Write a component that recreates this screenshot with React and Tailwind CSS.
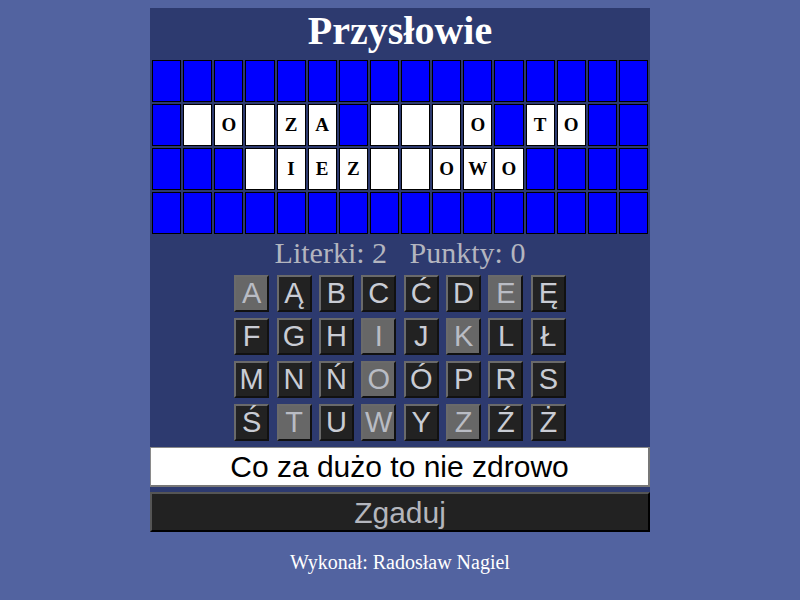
import React from "react";

const rows = [
  "################",
  "# O ZA#   O#TO##",
  "### IEZ  OWO####",
  "################",
];

const keys = [
  ["A", "Ą", "B", "C", "Ć", "D", "E", "Ę"],
  ["F", "G", "H", "I", "J", "K", "L", "Ł"],
  ["M", "N", "Ń", "O", "Ó", "P", "R", "S"],
  ["Ś", "T", "U", "W", "Y", "Z", "Ź", "Ż"],
];
const used = new Set(["A", "E", "I", "K", "O", "T", "W", "Z"]);

export default function App() {
  return (
    <div
      className="min-h-screen w-full bg-[#5263a0] pt-[8px] flex flex-col items-center"
      style={{ fontFamily: '"Liberation Serif", serif' }}
    >
      <div className="w-[500px] bg-[#2d3a6f] flex flex-col">
        <h1 className="h-[50px] leading-[46px] text-center text-white font-bold text-[40px] m-0">
          Przysłowie
        </h1>
        <div className="grid grid-cols-16 gap-[2px] p-[2px]">
          {rows.map((row, r) =>
            row.split("").map((ch, c) => (
              <div
                key={r + "-" + c}
                className={
                  "h-[42px] border border-black flex items-center justify-center font-bold text-[19px] text-black " +
                  (ch === "#" ? "bg-[#0000ff]" : "bg-white")
                }
              >
                {ch !== "#" && ch !== " " ? ch : ""}
              </div>
            ))
          )}
        </div>
        <div className="h-[33px] leading-[33px] text-center text-[30px] text-[#b3b5bf] whitespace-pre">
          {"Literki: 2   Punkty: 0"}
        </div>
        <div className="mt-[6px] flex flex-col items-center gap-[6px]">
          {keys.map((row, i) => (
            <div key={i} className="flex gap-[7.4px]">
              {row.map((k) => (
                <div
                  key={k}
                  className={
                    "w-[35px] h-[37px] flex items-center justify-center text-[29px] border-2 border-t-[#6a6a6a] border-l-[#6a6a6a] border-b-[#111] border-r-[#111] " +
                    (used.has(k) ? "bg-[#676767] text-[#b9bcc4]" : "bg-[#222222] text-[#c9ccd4]")
                  }
                  style={{ fontFamily: '"Liberation Sans", Arial, sans-serif' }}
                >
                  {k}
                </div>
              ))}
            </div>
          ))}
        </div>
        <div
          className="mt-[6px] h-[40px] bg-white border border-[#8a8a8a] border-b-2 border-r-2 border-b-[#777] border-r-[#777] flex items-center justify-center text-[30px] text-black"
          style={{ fontFamily: '"Liberation Sans", Arial, sans-serif' }}
        >
          Co za dużo to nie zdrowo
        </div>
        <div
          className="mt-[5px] h-[40px] bg-[#222222] border-2 border-t-[#555] border-l-[#555] border-b-black border-r-black flex items-center justify-center text-[30px] text-[#b4b6bd]"
          style={{ fontFamily: '"Liberation Sans", Arial, sans-serif' }}
        >
          Zgaduj
        </div>
      </div>
      <div className="mt-[19px] text-[20px] leading-[23px] text-white">
        Wykonał: Radosław Nagiel
      </div>
    </div>
  );
}
